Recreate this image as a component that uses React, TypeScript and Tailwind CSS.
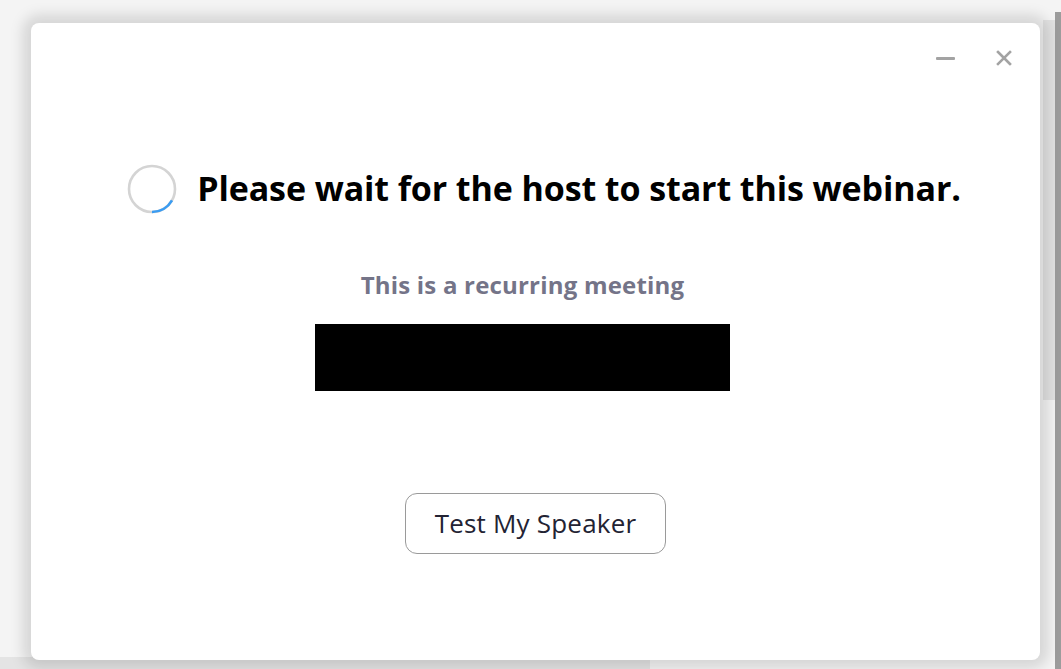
export default function App() {
  return (
    <div className="relative h-[669px] w-[1061px] overflow-hidden bg-[#f4f4f4] font-['Open_Sans','Noto_Sans',sans-serif]">
      {/* app behind the dialog */}
      <div className="absolute bottom-0 left-0 h-[12px] w-[650px] bg-[#e4e4e4]" />
      <div className="absolute right-0 top-[12px] bottom-0 w-[6px] bg-[#9c9c9c]" />
      <div className="absolute right-[6px] top-[20px] h-[380px] w-[12px] bg-[#e2e2e2]" />

      {/* dialog */}
      <div className="absolute left-[31px] top-[23px] flex h-[637px] w-[1009px] flex-col rounded-[8px] bg-white shadow-[0_0_14px_8px_rgba(0,0,0,0.13)]">
        <div className="flex h-[68px] items-center justify-end gap-[38px] pr-[26px] pt-[2px]">
          <button className="flex h-[20px] w-[22px] items-center justify-center" aria-label="Minimize">
            <span className="block h-[3px] w-[19px] rounded-[1px] bg-[#a3a3a3]" />
          </button>
          <button className="flex h-[20px] w-[20px] items-center justify-center" aria-label="Close">
            <svg viewBox="0 0 16 16" className="h-[16px] w-[16px]" stroke="#a3a3a3" strokeWidth="2.6" strokeLinecap="square">
              <path d="M2 2l12 12M14 2L2 14" />
            </svg>
          </button>
        </div>

        <div className="flex flex-col items-center">
          <div className="ml-[17px] mt-[72px] flex items-center gap-[20px]">
            <svg viewBox="0 0 50 50" className="h-[50px] w-[50px]">
              <circle cx="25" cy="25" r="23" fill="none" stroke="#d4d4d4" strokeWidth="2.6" />
              <path d="M25 48 A23 23 0 0 0 45 36.4" fill="none" stroke="#3a9cf2" strokeWidth="2.6" />
            </svg>
            <h1 className="text-[34px] font-bold tracking-[-0.1px] text-black">
              Please wait for the host to start this webinar.
            </h1>
          </div>

          <p className="mr-[26px] mt-[56px] text-[24px] font-bold leading-[30px] tracking-[0.2px] text-[#747488]">
            This is a recurring meeting
          </p>
          <div className="mr-[26px] mt-[24px] h-[67px] w-[415px] bg-black" />

          <button className="mt-[102px] h-[61px] w-[261px] rounded-[12px] border border-[#9a9a9a] bg-white text-[26px] tracking-[0.2px] text-[#232333]">
            Test My Speaker
          </button>
        </div>
      </div>
    </div>
  );
}
